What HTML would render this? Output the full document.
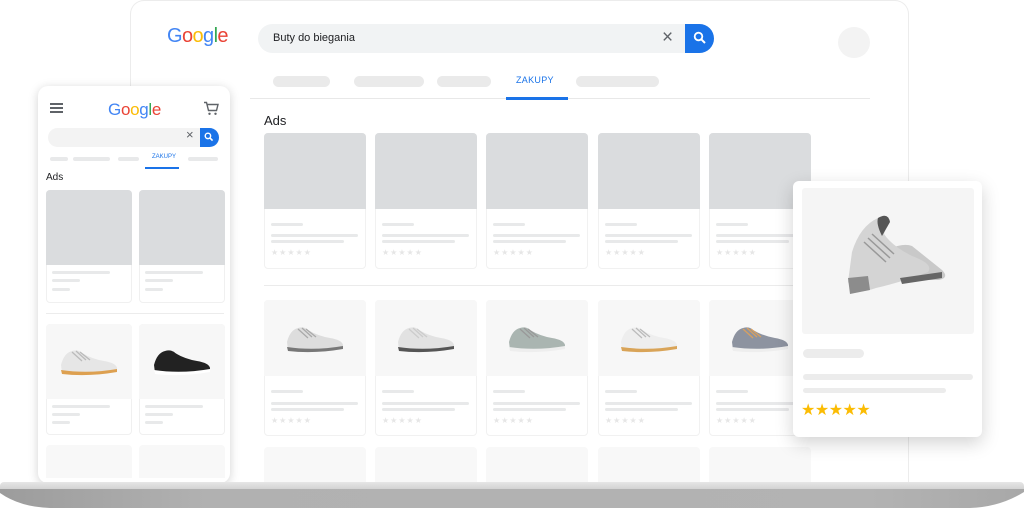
<!DOCTYPE html>
<html><head><meta charset="utf-8"><style>
*{margin:0;padding:0;box-sizing:border-box}
body{width:1024px;height:517px;background:#fff;position:relative;overflow:hidden;font-family:"Liberation Sans",Arial,sans-serif}
.a{position:absolute}
.bar{position:absolute;background:#e8e9ea;border-radius:3px}
.card{position:absolute;width:102px;border:1px solid #f1f1f1;border-radius:4px;background:#fff}
.g span{display:inline}
.stars{position:absolute;font-size:8px;color:#e6e6e6;letter-spacing:1px}
</style></head><body>

<div class="a" style="left:130px;top:0;width:779px;height:484px;border:1px solid #ececec;border-bottom:none;border-radius:14px 14px 0 0;background:#fff"></div>

<div class="a g" style="left:167px;top:25px;font-size:20px;letter-spacing:-0.6px"><span style="color:#4285f4">G</span><span style="color:#ea4335">o</span><span style="color:#fbbc05">o</span><span style="color:#4285f4">g</span><span style="color:#34a853">l</span><span style="color:#ea4335">e</span></div>
<div class="a" style="left:258px;top:24px;width:456px;height:29px;background:#f1f3f4;border-radius:15px"></div>
<div class="a" style="left:273px;top:32px;font-size:11px;color:#202124">Buty do biegania</div>
<div class="a" style="left:662px;top:27px;font-size:19px;color:#5f6368;line-height:22px">×</div>
<div class="a" style="left:685px;top:24px;width:29px;height:29px;background:#1a73e8;border-radius:0 15px 15px 0"></div>
<svg class="a" style="left:693px;top:31px" width="14" height="14" viewBox="0 0 14 14"><circle cx="5.5" cy="5.5" r="3.8" fill="none" stroke="#fff" stroke-width="1.8"/><path d="M8.3 8.3L12 12" stroke="#fff" stroke-width="2"/></svg>
<div class="a" style="left:838px;top:27px;width:32px;height:31px;background:#f3f3f3;border-radius:50%"></div>

<div class="bar" style="left:273px;top:76px;width:57px;height:11px;border-radius:6px;background:#eaeaea"></div>
<div class="bar" style="left:354px;top:76px;width:70px;height:11px;border-radius:6px;background:#eaeaea"></div>
<div class="bar" style="left:437px;top:76px;width:54px;height:11px;border-radius:6px;background:#eaeaea"></div>
<div class="a" style="left:516px;top:75px;font-size:9px;color:#1a73e8;letter-spacing:.3px">ZAKUPY</div>
<div class="bar" style="left:576px;top:76px;width:83px;height:11px;border-radius:6px;background:#eaeaea"></div>
<div class="a" style="left:250px;top:98px;width:620px;height:1px;background:#e8e8e8"></div>
<div class="a" style="left:506px;top:97px;width:62px;height:3px;background:#1a73e8"></div>
<div class="a" style="left:264px;top:113px;font-size:13px;color:#202124">Ads</div>

<div class="a" style="left:264px;top:285px;width:560px;height:1px;background:#ebebeb"></div>

<div id="desk"></div>

<div class="a" style="left:38px;top:86px;width:192px;height:397px;background:#fff;border-radius:10px;box-shadow:0 2px 10px rgba(0,0,0,.18)"></div>
<div class="a" style="left:50px;top:103px;width:13px;height:2px;background:#5f6368;box-shadow:0 4px 0 #5f6368,0 8px 0 #5f6368"></div>
<div class="a g" style="left:108px;top:100px;font-size:17px;letter-spacing:-0.3px"><span style="color:#4285f4">G</span><span style="color:#ea4335">o</span><span style="color:#fbbc05">o</span><span style="color:#4285f4">g</span><span style="color:#34a853">l</span><span style="color:#ea4335">e</span></div>
<svg class="a" style="left:203px;top:101px" width="16" height="15" viewBox="0 0 16 15"><path d="M1 1.5h2.5l2 8h8l1.5-6H4.5" fill="none" stroke="#5f6368" stroke-width="1.4"/><circle cx="6.5" cy="12.8" r="1.2" fill="#5f6368"/><circle cx="12.5" cy="12.8" r="1.2" fill="#5f6368"/></svg>
<div class="a" style="left:48px;top:128px;width:170px;height:19px;background:#f3f3f3;border-radius:10px"></div>
<div class="a" style="left:186px;top:127px;font-size:13px;color:#5f6368">×</div>
<div class="a" style="left:200px;top:128px;width:19px;height:19px;background:#1a73e8;border-radius:0 10px 10px 0"></div>
<svg class="a" style="left:204px;top:132px" width="10" height="10" viewBox="0 0 14 14"><circle cx="5.5" cy="5.5" r="3.8" fill="none" stroke="#fff" stroke-width="2"/><path d="M8.3 8.3L12 12" stroke="#fff" stroke-width="2.2"/></svg>
<div class="bar" style="left:50px;top:157px;width:18px;height:4px"></div>
<div class="bar" style="left:73px;top:157px;width:37px;height:4px"></div>
<div class="bar" style="left:118px;top:157px;width:21px;height:4px"></div>
<div class="a" style="left:152px;top:154px;font-size:6px;color:#1a73e8">ZAKUPY</div>
<div class="a" style="left:145px;top:167px;width:34px;height:1.5px;background:#1a73e8"></div>
<div class="bar" style="left:188px;top:157px;width:30px;height:4px"></div>
<div class="a" style="left:46px;top:172px;font-size:10px;color:#202124">Ads</div>
<div class="a" style="left:46px;top:313px;width:178px;height:1px;background:#ececec"></div>
<div id="ph"></div>

<div class="a" style="left:0;top:482px;width:1024px;height:8px;background:linear-gradient(#e6e6e6,#d0d0d0);border-radius:4px 4px 0 0"></div>
<svg class="a" style="left:0;top:489px" width="1024" height="20" viewBox="0 0 1024 20"><defs><linearGradient id="bg" x1="0" x2="1"><stop offset="0" stop-color="#9c9c9c"/><stop offset=".2" stop-color="#b1b1b1"/><stop offset=".85" stop-color="#b3b3b3"/><stop offset="1" stop-color="#a8a8a8"/></linearGradient></defs><path d="M0 0H1024V3Q1000 18 970 19H50Q20 18 0 4Z" fill="url(#bg)"/></svg>

<div class="a" style="left:793px;top:181px;width:189px;height:256px;background:#fff;border-radius:6px;box-shadow:0 6px 18px rgba(0,0,0,.18)"></div>
<div class="a" style="left:802px;top:188px;width:172px;height:146px;background:#f5f5f5;border-radius:3px"></div>
<svg class="a" style="left:842px;top:212px" width="108" height="84" viewBox="0 0 108 84"><path d="M40 40 Q60 30 70 34 L100 58 Q108 66 96 68 L50 68 Z" fill="#c9c9c9"/><path d="M6 70 L10 40 Q18 14 36 6 Q44 2 46 8 L42 22 Q50 34 70 44 Q92 52 86 60 Q60 70 34 76 Q12 84 6 70Z" fill="#d4d4d4"/><path d="M36 6 Q46 0 48 10 L40 24 Q34 12 36 6Z" fill="#555"/><path d="M6 66 L26 64 L28 78 L8 82Z" fill="#8c8c8c"/><path d="M58 66 L100 60 L100 66 L60 72Z" fill="#666"/><path d="M22 30 L44 50 M26 26 L48 46 M30 22 L52 42" stroke="#999" stroke-width="1.5"/></svg>
<div class="a" style="left:803px;top:349px;width:61px;height:9px;background:#ececec;border-radius:5px"></div>
<div class="a" style="left:803px;top:374px;width:170px;height:6px;background:#ececec;border-radius:3px"></div>
<div class="a" style="left:803px;top:388px;width:143px;height:5px;background:#ececec;border-radius:3px"></div>
<div class="a" style="left:801px;top:400px;font-size:16px;color:#fbbc04;letter-spacing:-0.5px">★★★★★</div>

<script>
function shoe(t){
 const c={a:['#ddd','#777','#aaa'],b:['#e2e2e2','#555','#ccc'],c:['#aab5b1','#eee','#999'],d:['#eee','#d9a458','#bbb'],e:['#8d93a0','#eee','#d8a060'],f:['#222','#fff','#222'],g:['#e6e6e6','#dda050','#bbb']}[t];
 return `<svg width="62" height="34" viewBox="0 0 62 34"><path d="M3 22 Q6 10 14 8 Q20 6 24 10 Q34 16 46 18 Q58 20 59 25 L59 28 Q30 32 4 30Z" fill="${c[0]}"/><path d="M3 27 Q30 31 59 26 L59 29 Q30 34 4 31Z" fill="${c[1]}"/><path d="M14 9 L24 18 M18 8 L28 17 M22 9 L32 17" stroke="${c[2]}" stroke-width="1.3"/></svg>`;
}
let h='';
const xs=[264,375,486,598,709];
const sh=['a','b','c','d','e'];
xs.forEach((x,i)=>{
 h+=`<div class="card" style="left:${x}px;top:133px;height:136px"></div><div class="a" style="left:${x}px;top:133px;width:102px;height:76px;background:#dadcde;border-radius:4px 4px 0 0"></div>`;
 [[223,32],[234,87],[240,73]].forEach(b=>h+=`<div class="bar" style="left:${x+7}px;top:${b[0]}px;width:${b[1]}px;height:3px"></div>`);
 h+=`<div class="stars" style="left:${x+7}px;top:248px">★★★★★</div>`;
 h+=`<div class="card" style="left:${x}px;top:300px;height:136px"></div><div class="a" style="left:${x}px;top:300px;width:102px;height:76px;background:#f7f7f7;border-radius:4px 4px 0 0"></div><div class="a" style="left:${x+20}px;top:320px">${shoe(sh[i])}</div>`;
 [[390,32],[402,87],[408,73]].forEach(b=>h+=`<div class="bar" style="left:${x+7}px;top:${b[0]}px;width:${b[1]}px;height:3px"></div>`);
 h+=`<div class="stars" style="left:${x+7}px;top:416px">★★★★★</div>`;
 h+=`<div class="a" style="left:${x}px;top:447px;width:102px;height:37px;background:#f8f8f8;border-radius:4px 4px 0 0"></div>`;
});
document.getElementById('desk').outerHTML=h;
let p='';
[46,139].forEach((x,i)=>{
 p+=`<div class="a" style="left:${x}px;top:190px;width:86px;height:113px;border:1px solid #f0f0f0;border-radius:4px"></div><div class="a" style="left:${x}px;top:190px;width:86px;height:75px;background:#dadcde;border-radius:4px 4px 0 0"></div>`;
 p+=`<div class="bar" style="left:${x+6}px;top:271px;width:58px;height:3px"></div><div class="bar" style="left:${x+6}px;top:279px;width:28px;height:3px"></div><div class="bar" style="left:${x+6}px;top:288px;width:18px;height:3px"></div>`;
 p+=`<div class="a" style="left:${x}px;top:324px;width:86px;height:111px;border:1px solid #f0f0f0;border-radius:4px"></div><div class="a" style="left:${x}px;top:324px;width:86px;height:75px;background:#f7f7f7;border-radius:4px 4px 0 0"></div><div class="a" style="left:${x+12}px;top:343px">${shoe(i?'f':'g')}</div>`;
 p+=`<div class="bar" style="left:${x+6}px;top:405px;width:58px;height:3px"></div><div class="bar" style="left:${x+6}px;top:413px;width:28px;height:3px"></div><div class="bar" style="left:${x+6}px;top:421px;width:18px;height:3px"></div>`;
 p+=`<div class="a" style="left:${x}px;top:445px;width:86px;height:33px;background:#f8f8f8;border-radius:4px 4px 0 0"></div>`;
});
document.getElementById('ph').outerHTML=p;
</script>
</body></html>
